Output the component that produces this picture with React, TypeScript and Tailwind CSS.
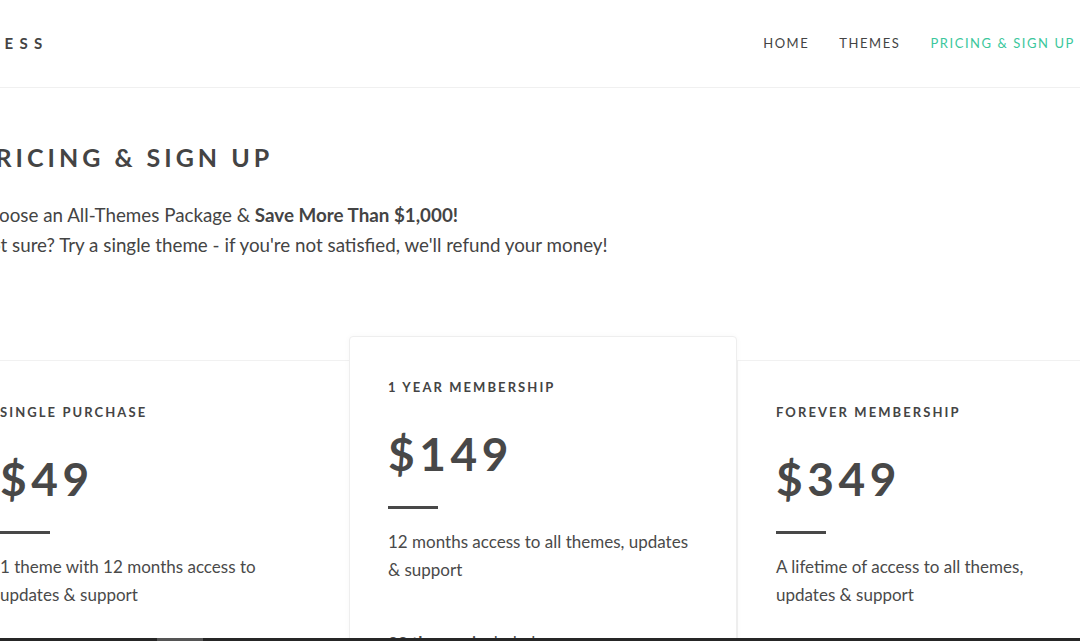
import React from "react";

type Plan = {
  name: string;
  price: string;
  desc: string;
  featured?: boolean;
};

const plans: Plan[] = [
  { name: "Single Purchase", price: "$49", desc: "1 theme with 12 months access to updates & support" },
  { name: "1 Year Membership", price: "$149", desc: "12 months access to all themes, updates & support", featured: true },
  { name: "Forever Membership", price: "$349", desc: "A lifetime of access to all themes, updates & support" },
];

const PlanCard = ({ plan }: { plan: Plan }) => (
  <div
    className={
      plan.featured
        ? "w-[388px] shrink-0 -mt-[24px] rounded-[4px] border border-[#eeeeee] bg-white pl-[38px] pr-[42px] pt-[41px] pb-10 shadow-[0_0_6px_rgba(0,0,0,0.03)] relative z-10"
        : "w-[388px] shrink-0 border-t border-l border-[#f1f1f1] bg-white pl-[38px] pr-[42px] pt-[42px] pb-10"
    }
  >
    <h3 className="text-[13px] font-bold uppercase tracking-[0.16em] leading-[18px] text-[#444]">
      {plan.name}
    </h3>
    <div className="mt-[30px] text-[46px] font-bold leading-[56px] tracking-[0.1em] text-[#484848]">
      {plan.price}
    </div>
    <div className="mt-[24px] h-[3px] w-[50px] bg-[#484848]" />
    <p className="mt-[19px] text-[17px] leading-[28px] text-[#4a4a4a]">{plan.desc}</p>
    {plan.featured && (
      <p className="mt-[45px] text-[17px] leading-[28px] text-[#4a4a4a]">
        <span className="font-bold">23 themes</span> included
      </p>
    )}
  </div>
);

export default function App() {
  return (
    <div
      className="relative h-[641px] w-[1080px] overflow-hidden bg-white text-[#444]"
      style={{ fontFamily: "Lato, 'Open Sans', sans-serif" }}
    >
      {/* header */}
      <header className="flex h-[88px] items-center justify-between border-b border-[#f0f0f0] pr-[5px]">
        <div className="-ml-[27px] text-[15px] font-bold tracking-[0.42em] text-[#444]">PRESS</div>
        <nav className="flex items-center gap-[30px] text-[13px] tracking-[0.12em]">
          <a className="text-[#444]">HOME</a>
          <a className="text-[#444]">THEMES</a>
          <a className="text-[#3bc79c]">PRICING &amp; SIGN UP</a>
        </nav>
      </header>

      {/* intro */}
      <section className="-ml-[24px] pt-[54px]">
        <h1 className="text-[25px] font-bold leading-[30px] tracking-[0.16em] text-[#444]">
          PRICING &amp; SIGN UP
        </h1>
        <div className="mt-[28px] text-[18.8px] leading-[30px] text-[#444]">
          <p>
            Choose an All-Themes Package &amp; <span className="font-bold">Save More Than $1,000!</span>
          </p>
          <p>Not sure? Try a single theme - if you're not satisfied, we'll refund your money!</p>
        </div>
      </section>

      {/* plans */}
      <section className="-ml-[39px] mt-[100px] flex items-start">
        {plans.map((p) => (
          <PlanCard key={p.name} plan={p} />
        ))}
      </section>

      {/* bottom scrollbar strip */}
      <div className="absolute bottom-0 left-0 z-20 h-[3px] w-full bg-[#262626]">
        <div className="absolute left-[157px] top-0 h-full w-[46px] bg-[#555]" />
      </div>
    </div>
  );
}
